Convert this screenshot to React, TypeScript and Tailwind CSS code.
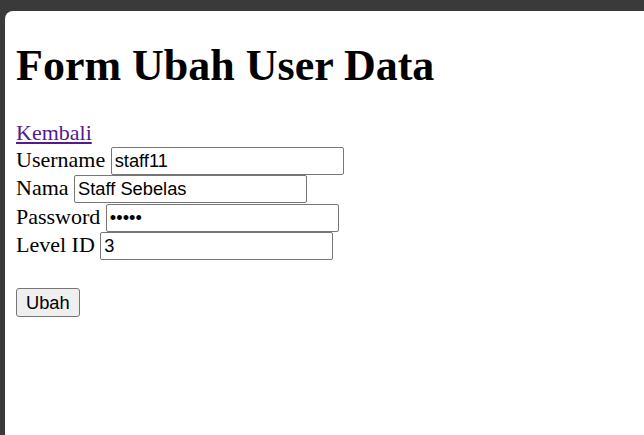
import React from 'react';

const fields = [
  { label: 'Username', type: 'text', value: 'staff11' },
  { label: 'Nama', type: 'text', value: 'Staff Sebelas' },
  { label: 'Password', type: 'password', value: '12345' },
  { label: 'Level ID', type: 'text', value: '3' },
];

const App: React.FC = () => {
  return (
    <div className="h-screen bg-[#3a3a3a] pt-[11px] pl-[5px] overflow-hidden">
      <div className="h-full bg-white rounded-tl-[8px] px-[11px] pt-[30px] text-black font-['Liberation_Serif',serif]">
        <h1 className="text-[44px] font-bold leading-[49px] mb-[30px]">Form Ubah User Data</h1>

        <a href="#" className="block text-[22px] leading-[25px] text-[#551a8b] underline w-fit">
          Kembali
        </a>

        <form className="mt-[1.5px]" onSubmit={(e) => e.preventDefault()}>
          {fields.map((f) => (
            <div key={f.label} className="flex items-baseline gap-[5.5px] h-[28.67px]">
              <label className="text-[22px] leading-[25px] whitespace-nowrap">{f.label}</label>
              <input
                type={f.type}
                defaultValue={f.value}
                className="w-[233px] h-[28px] border border-[#767676] rounded-[2px] px-[3px] text-[18.3px] font-['Liberation_Sans',Arial,sans-serif] text-black bg-white outline-none"
              />
            </div>
          ))}

          <button
            type="submit"
            className="mt-[27px] h-[29px] px-[9px] border border-[#767676] rounded-[3px] bg-[#efefef] text-[18.3px] leading-[21px] font-['Liberation_Sans',Arial,sans-serif] text-black"
          >
            Ubah
          </button>
        </form>
      </div>
    </div>
  );
};

export default App;
